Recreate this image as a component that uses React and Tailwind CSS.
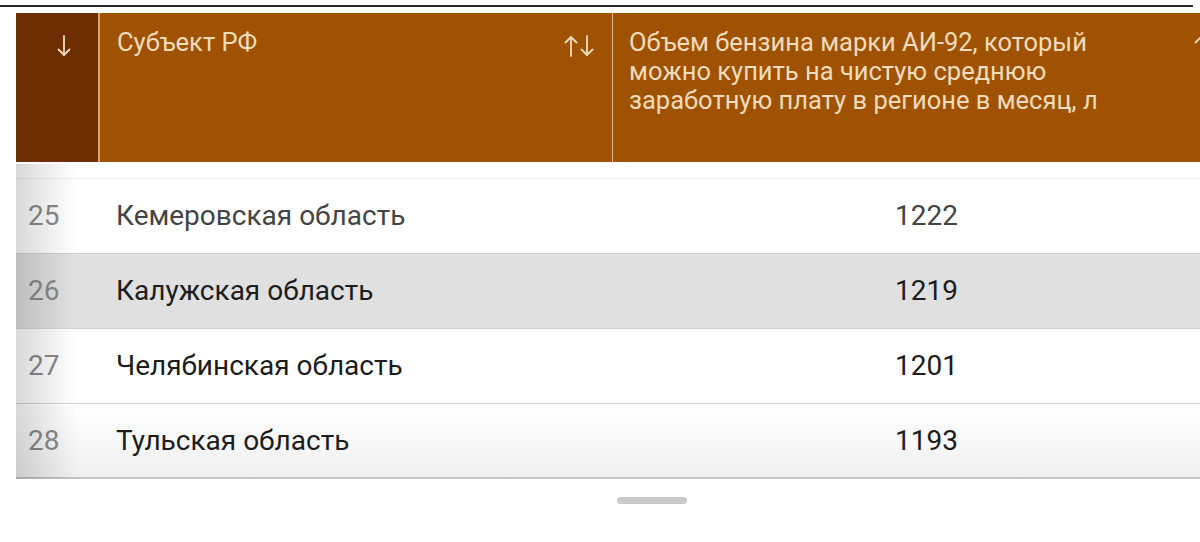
import React from 'react';

const rows = [
  { n: 25, name: 'Кемеровская область', value: 1222, faded: true },
  { n: 26, name: 'Калужская область', value: 1219, active: true },
  { n: 27, name: 'Челябинская область', value: 1201 },
  { n: 28, name: 'Тульская область', value: 1193, last: true },
];

function Arrow({ up }) {
  return (
    <svg width="14" height="22" viewBox="0 0 14 22" fill="none" stroke="currentColor" strokeWidth="1.8" strokeLinecap="round" strokeLinejoin="round">
      {up ? (
        <>
          <path d="M7 21V2" />
          <path d="M1.5 7.5L7 2l5.5 5.5" />
        </>
      ) : (
        <>
          <path d="M7 1v19" />
          <path d="M1.5 14.5L7 20l5.5-5.5" />
        </>
      )}
    </svg>
  );
}

export default function App() {
  return (
    <div
      className="relative w-[1200px] h-[542px] overflow-hidden bg-white"
      style={{ fontFamily: 'Roboto, "Noto Sans", sans-serif' }}
    >
      {/* top rule */}
      <div className="h-[5px]" />
      <div className="h-[2px] w-[1193px] bg-[#2b2b2b]" />
      <div className="h-[6px]" />

      <div className="ml-4 w-[1240px]">
        {/* header */}
        <div className="flex h-[149px] text-[25.5px] leading-[29px] text-[#f6dcbf]">
          <div className="w-[82px] bg-[#6d2f02] flex justify-center pt-[22px]">
            <span className="ml-[14px]"><Arrow /></span>
          </div>
          <div className="w-[2px] bg-[#d9a46e]" />
          <div className="w-[512px] bg-[#9f5201] flex justify-between pl-[17px] pr-[18px] pt-[15px]">
            <span>Субъект РФ</span>
            <span className="flex gap-[2px] pt-[7px] h-fit"><Arrow up /><Arrow /></span>
          </div>
          <div className="w-px bg-[#e3b98a]" />
          <div className="flex-1 bg-[#9f5201] flex justify-between pl-4 pr-4 pt-[15px]">
            <span className="w-[500px]">
              Объем бензина марки АИ-92, который можно купить на чистую среднюю заработную плату в регионе в месяц, л
            </span>
            <span className="flex gap-[2px] pt-[7px] h-fit mr-[16px]"><Arrow up /><Arrow /></span>
          </div>
        </div>

        {/* body */}
        <div className="relative">
          <div className="h-[17px] bg-white border-b border-[#ececec]" />
          {rows.map((r) => (
            <div
              key={r.n}
              className={`flex items-center h-[75px] text-[28px] border-b ${
                r.active ? 'bg-[#e0e0e0]' : r.last ? 'bg-gradient-to-b from-white to-[#efefef]' : 'bg-white'
              } ${r.last ? 'border-b-2 border-[#c4c4c4]' : 'border-[#d2d2d2]'}`}
            >
              <div className="w-[100px] pl-3 text-[#8a8a8a]">{r.n}</div>
              <div className={`w-[514px] ${r.faded ? 'text-[#444]' : 'text-[#1c1c1c]'}`}>{r.name}</div>
              <div className={`pl-[265px] ${r.faded ? 'text-[#444]' : 'text-[#1c1c1c]'}`}>{r.value}</div>
            </div>
          ))}
          {/* sticky column shadow */}
          <div className="absolute left-0 top-[2px] bottom-0 w-[60px] bg-gradient-to-r from-black/15 to-transparent pointer-events-none" />
        </div>
      </div>

      {/* home indicator */}
      <div className="mt-[18px] mx-auto w-[70px] h-[7px] rounded-full bg-[#cacaca] translate-x-[52px]" />
    </div>
  );
}
